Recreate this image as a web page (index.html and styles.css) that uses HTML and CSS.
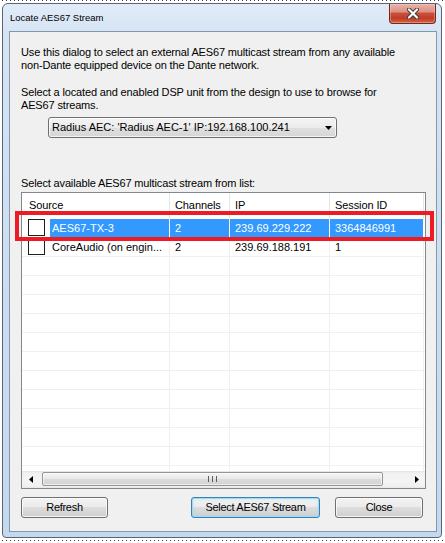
FILE: index.html
```html
<!DOCTYPE html>
<html lang="en">
<head>
  <meta charset="UTF-8" />
  <title>Locate AES67 Stream</title>
  <link rel="stylesheet" href="styles.css">
</head>
<body>
  <div class="marks"></div>

  <div class="window">
    <div class="titlebar">
      <span class="title">Locate AES67 Stream</span>
      <span class="close-btn">
        <svg width="12" height="11" viewBox="0 0 12 11">
          <path d="M2 1.5 L10 9.5 M10 1.5 L2 9.5" stroke="#3b3b3b" stroke-width="4" stroke-linecap="round"/>
          <path d="M2 1.5 L10 9.5 M10 1.5 L2 9.5" stroke="#fff" stroke-width="2.2" stroke-linecap="round"/>
        </svg>
      </span>
    </div>

    <div class="client">
      <p class="intro">Use this dialog to select an external AES67 multicast stream from any available<br>non-Dante equipped device on the Dante network.</p>
      <p class="intro intro-last">Select a located and enabled DSP unit from the design to use to browse for<br>AES67 streams.</p>

      <div class="combo">
        <span>Radius AEC: 'Radius AEC-1' IP:192.168.100.241</span>
        <svg width="7" height="4" viewBox="0 0 7 4"><polygon points="0,0 7,0 3.5,4" fill="#000"/></svg>
      </div>

      <p class="list-label">Select available AES67 multicast stream from list:</p>

      <div class="listview">
        <div class="lv-header">
          <span class="first">Source</span>
          <span>Channels</span>
          <span>IP</span>
          <span>Session ID</span>
        </div>

        <div class="lv-body">
          <div class="row sel">
            <span class="src-cell"><i class="check"></i><span class="src">AES67-TX-3</span></span>
            <span>2</span>
            <span>239.69.229.222</span>
            <span>3364846991</span>
          </div>
          <div class="row">
            <span class="src-cell"><i class="check"></i><span class="src">CoreAudio (on engin...</span></span>
            <span>2</span>
            <span>239.69.188.191</span>
            <span>1</span>
          </div>
          <div class="row"><span></span><span></span><span></span><span></span></div>
          <div class="row"><span></span><span></span><span></span><span></span></div>
          <div class="row"><span></span><span></span><span></span><span></span></div>
          <div class="row"><span></span><span></span><span></span><span></span></div>
          <div class="row"><span></span><span></span><span></span><span></span></div>
          <div class="row"><span></span><span></span><span></span><span></span></div>
          <div class="row"><span></span><span></span><span></span><span></span></div>
          <div class="row"><span></span><span></span><span></span><span></span></div>
          <div class="row"><span></span><span></span><span></span><span></span></div>
          <div class="row"><span></span><span></span><span></span><span></span></div>
          <div class="row"><span></span><span></span><span></span><span></span></div>
          <div class="row"><span></span><span></span><span></span><span></span></div>
        </div>

        <div class="hscroll">
          <span class="sb-btn">
            <svg width="4" height="7" viewBox="0 0 4 7"><polygon points="4,0 0,3.5 4,7" fill="#000"/></svg>
          </span>
          <span class="thumb">
            <svg width="9" height="6" viewBox="0 0 9 6">
              <rect x="0" y="0" width="1" height="6" fill="#5e5e5e"/>
              <rect x="4" y="0" width="1" height="6" fill="#5e5e5e"/>
              <rect x="8" y="0" width="1" height="6" fill="#5e5e5e"/>
            </svg>
          </span>
          <span class="sb-btn sb-right">
            <svg width="4" height="7" viewBox="0 0 4 7"><polygon points="0,0 4,3.5 0,7" fill="#000"/></svg>
          </span>
        </div>

        <!-- marker round the chosen stream -->
        <div class="pick"></div>
      </div>

      <div class="buttons">
        <span class="btn btn-refresh">Refresh</span>
        <span class="btn btn-default">Select AES67 Stream</span>
        <span class="btn btn-close">Close</span>
      </div>
    </div>
  </div>

  <div class="marks"></div>
</body>
</html>
```

FILE: styles.css
```css
/* RESET */
* { margin: 0; padding: 0; box-sizing: border-box; }
body {
  width: 445px;
  height: 543px;
  overflow: hidden;
  background: #fff;
  color: #000;
  font: 11px/13px "Liberation Sans", Arial, sans-serif;
}

/* dotted capture edge */
.marks {
  height: 1px;
  margin: 0 2px;
  background: repeating-linear-gradient(to right, #3a3a3a 0 1px, transparent 1px 4px);
}

/* WINDOW FRAME */
.window {
  margin: 2px 0 0 2px;
  width: 440px;
  height: 535px;
  border: 1px solid #5a6677;
  border-radius: 6px 6px 4px 4px;
  padding: 0 4px 5px 6px;
  background: linear-gradient(to bottom, #e2ecf8 0, #d6e4f4 28px, #cadcf1 60%, #c4d8ef 100%);
  margin-bottom: 2px;
}

.titlebar {
  height: 27px;
  display: flex;
  justify-content: space-between;
  align-items: flex-start;
}
.title {
  padding: 8px 0 0 1px;
  font-size: 9.5px;
  line-height: 12px;
  color: #000;
}
.close-btn {
  width: 47px;
  height: 20px;
  margin-right: 1px;
  display: flex;
  align-items: center;
  justify-content: center;
  border: 1px solid #6e2a20;
  border-top: none;
  border-radius: 0 0 4px 4px;
  background: linear-gradient(to bottom, #eab4a9 0, #dc9285 40%, #c9503b 50%, #c23b25 75%, #d46447 100%);
  box-shadow: inset 0 0 0 1px rgba(255, 220, 210, 0.35);
}

/* CLIENT AREA */
.client {
  height: 501px;
  border: 1px solid #8797aa;
  background: #f0f0f0;
  padding: 14px 10px 0 11px;
}

.intro { margin-bottom: 14px; letter-spacing: -0.15px; }
.intro-last { margin-bottom: 5px; }

.combo {
  margin-left: 27px;
  width: 289px;
  height: 21px;
  border: 1px solid #707070;
  border-radius: 3px;
  padding: 0 4px 0 3px;
  display: flex;
  align-items: center;
  justify-content: space-between;
  line-height: 19px;
  background: linear-gradient(to bottom, #f4f4f4, #ececec 50%, #e0e0e0 50%, #d6d6d6);
  box-shadow: inset 0 0 0 1px rgba(255, 255, 255, 0.7);
}

.list-label { margin-top: 39px; letter-spacing: -0.15px; }

/* LIST VIEW */
.listview {
  position: relative;
  margin-top: 2px;
  width: 405px;
  height: 297px;
  border: 1px solid #828790;
  background: #fff;
}

.lv-header {
  display: grid;
  grid-template-columns: 148px 60px 100px 94px;
  height: 26px;
}
.lv-header span {
  padding-left: 5px;
  line-height: 25px;
  border-right: 1px solid #e5e5e5;
  letter-spacing: -0.1px;
}
.lv-header .first { padding-left: 7px; }

.lv-body {
  height: 252px;
  overflow: hidden;
}
.row {
  display: grid;
  grid-template-columns: 148px 60px 100px 94px;
  height: 19px;
  border-bottom: 1px solid #f0f0f0;
}
.row > span {
  padding-left: 5px;
  line-height: 18px;
  white-space: nowrap;
  overflow: hidden;
  border-right: 1px solid #f0f0f0;
}
.row > .src-cell {
  display: flex;
  padding-left: 6px;
}
.check {
  flex: none;
  width: 17px;
  height: 17px;
  border: 1px solid #1e1e1e;
  background: #fff;
}
.src {
  flex: 1;
  margin-left: 5px;
  padding-left: 2px;
  overflow: hidden;
}

.row.sel > span { border-right-color: #fff; }
.row.sel > span:not(.src-cell),
.row.sel .src {
  background: #3399ff;
  color: #fff;
}

/* horizontal scroll bar */
.hscroll {
  height: 17px;
  display: flex;
  background: linear-gradient(to bottom, #e3e3e3 0, #f1f1f1 2px, #f4f4f4 50%, #f1f1f1 15px, #e6e6e6 100%);
}
.sb-btn {
  width: 17px;
  height: 17px;
  display: flex;
  align-items: center;
  justify-content: center;
}
.sb-right { margin-left: auto; }
.thumb {
  width: 341px;
  height: 14px;
  margin: 1px 0 0 3px;
  display: flex;
  align-items: center;
  justify-content: center;
  border: 1px solid #959595;
  border-radius: 2px;
  background: linear-gradient(to bottom, #f3f3f3, #e9e9e9 50%, #dcdcdc 50%, #d3d3d3);
  box-shadow: inset 0 0 0 1px rgba(255, 255, 255, 0.6);
}

.pick {
  position: absolute;
  left: -7px;
  top: 18px;
  width: 419px;
  height: 30px;
  border: 4px solid #ed1c24;
  pointer-events: none;
}

/* BUTTONS */
.buttons {
  display: flex;
  margin-top: 8px;
}
.btn {
  height: 21px;
  border: 1px solid #707070;
  border-radius: 3px;
  line-height: 19px;
  text-align: center;
  letter-spacing: -0.3px;
  background: linear-gradient(to bottom, #f2f2f2, #ebebeb 50%, #dddddd 50%, #cfcfcf);
  box-shadow: inset 0 0 0 1px rgba(255, 255, 255, 0.75);
}
.btn-refresh { width: 87px; }
.btn-default {
  width: 129px;
  margin-left: 83px;
  border-color: #3c7fb1;
  box-shadow: inset 0 0 0 1px rgba(150, 220, 248, 0.95), inset 0 0 3px 1px rgba(150, 215, 245, 0.5);
}
.btn-close { width: 88px; margin-left: 15px; }
```
